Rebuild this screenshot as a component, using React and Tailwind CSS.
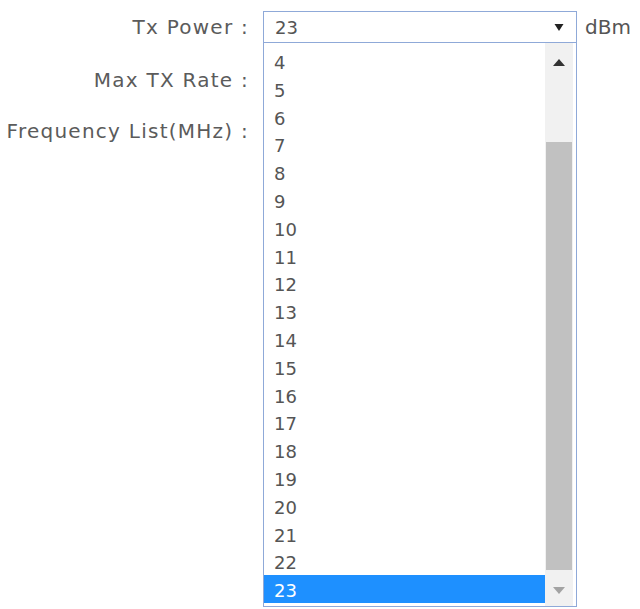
import { useState } from "react";

const powers = Array.from({ length: 20 }, (_, i) => i + 4);

export default function App() {
  const [value, setValue] = useState(23);

  return (
    <div
      className="relative w-[640px] h-[609px] bg-white text-[18px] text-[#5b5b5b] overflow-hidden"
      style={{ fontFamily: '"DejaVu Sans", Verdana, sans-serif' }}
    >
      {/* Form rows */}
      <div className="flex flex-col pt-[11px]">
        <div className="flex items-center h-[32px]">
          <div className="w-[250px] pr-[1px] text-right text-[20px] tracking-[1.25px]">Tx Power :</div>
          <div className="relative ml-[13px] w-[314px]">
            {/* Select box */}
            <div className="flex items-center justify-between h-[32px] border border-[#8fa9d8] px-[11px] text-[#555]">
              <span>{value}</span>
              <svg width="10" height="10" viewBox="0 0 10 10" className="mr-[1px]">
                <path d="M0.5 2h9L5 9z" fill="#222" />
              </svg>
            </div>

            {/* Open dropdown list */}
            <div className="absolute left-0 top-[32px] z-10 flex w-[314px] h-[564px] border border-t-0 border-[#8fa9d8] bg-white">
              <div className="flex-1 flex flex-col pt-[4px]">
                {powers.map((p) => (
                  <div
                    key={p}
                    onClick={() => setValue(p)}
                    className={`h-[27.8px] leading-[27.8px] pl-[10px] pt-[2px] ${
                      p === value ? "bg-[#1e90ff] text-white" : "text-[#555]"
                    }`}
                  >
                    {p}
                  </div>
                ))}
              </div>

              {/* Scrollbar */}
              <div className="flex flex-col w-[28px] mr-[3px] bg-[#f1f1f1]">
                <div className="flex items-center justify-center h-[37px] pt-[2px]">
                  <svg width="12" height="7" viewBox="0 0 12 7">
                    <path d="M0 7L6 0l6 7z" fill="#333" />
                  </svg>
                </div>
                <div className="h-[62px]" />
                <div className="mx-[1px] h-[428px] bg-[#c1c1c1]" />
                <div className="flex flex-1 items-center justify-center pt-[4px]">
                  <svg width="12" height="7" viewBox="0 0 12 7">
                    <path d="M0 0h12L6 7z" fill="#a3a3a3" />
                  </svg>
                </div>
              </div>
            </div>
          </div>
          <div className="ml-[8px] text-[20px] text-[#555]">dBm</div>
        </div>

        <div className="flex items-center h-[32px] mt-[21px]">
          <div className="w-[250px] pr-[1px] text-right text-[20px] tracking-[1.25px]">Max TX Rate :</div>
        </div>

        <div className="flex items-center h-[32px] mt-[19px]">
          <div className="w-[250px] pr-[1px] text-right text-[20px] tracking-[1.25px]">Frequency List(MHz) :</div>
        </div>
      </div>
    </div>
  );
}
